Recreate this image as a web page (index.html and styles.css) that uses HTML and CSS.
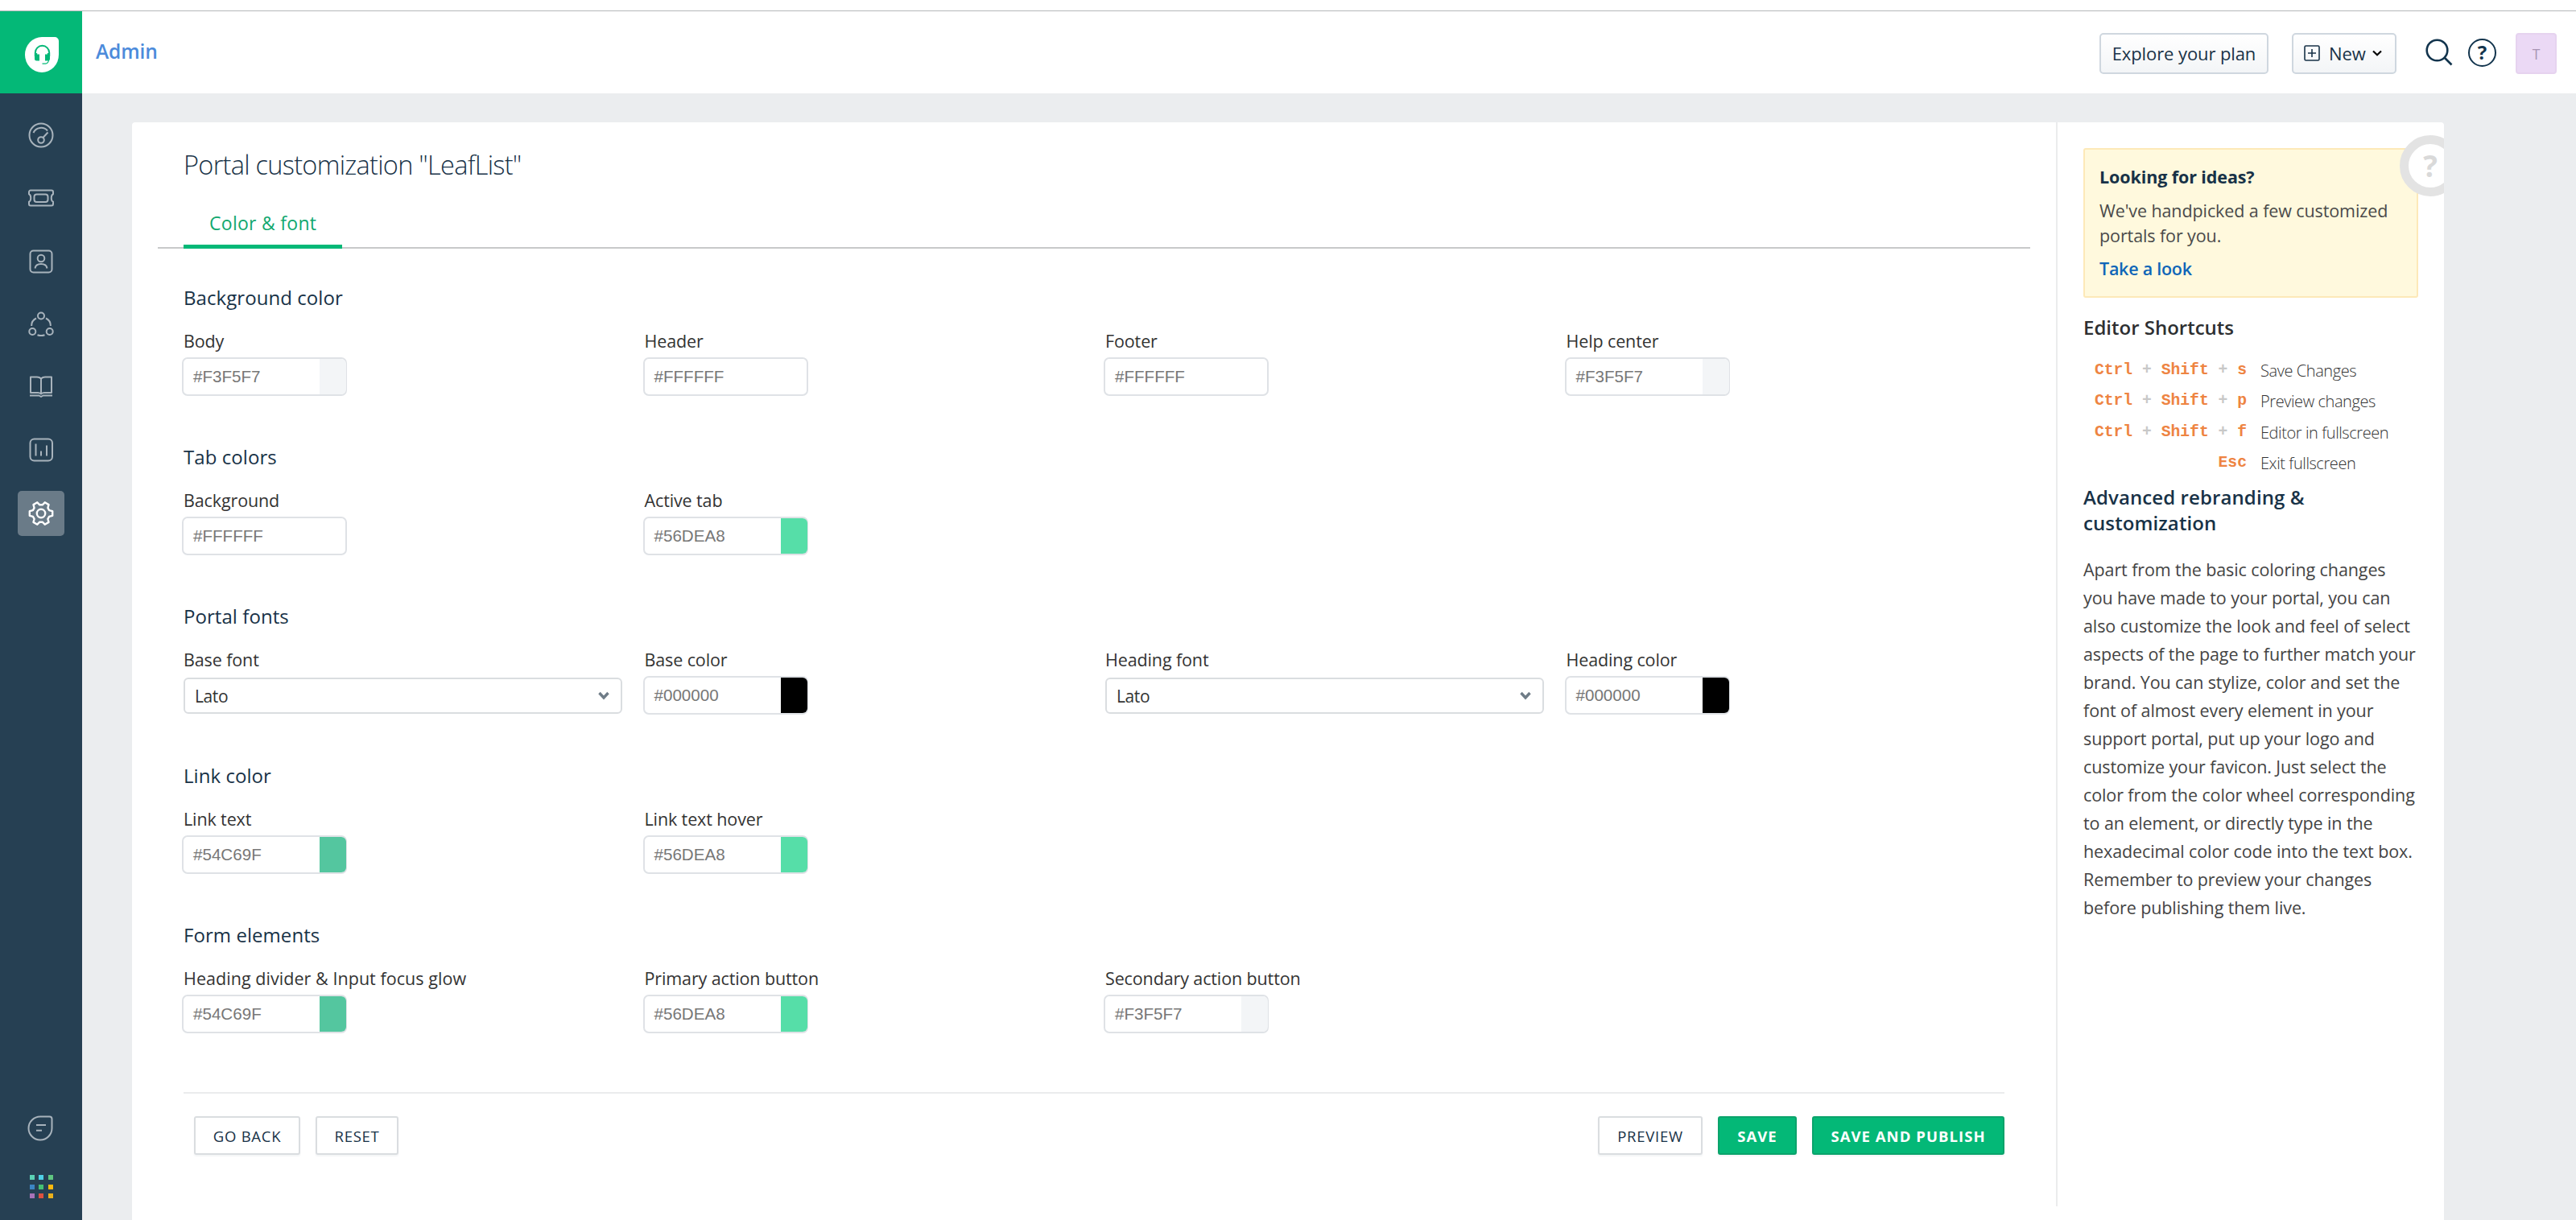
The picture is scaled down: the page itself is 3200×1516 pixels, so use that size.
FILE: index.html
```
<!DOCTYPE html>
<html lang="en">
<head>
    <meta charset="UTF-8">
    <meta name="viewport" content="width=device-width, initial-scale=1.0">
    <title>Portal customization</title>
    <link rel="stylesheet" href="styles.css">
</head>

<body>
    <div class="top-line"></div>
    <div class="app">
        <!-- Left navigation -->
        <nav class="sidebar">
            <a class="logo">
                <svg width="42" height="44" viewBox="0 0 42 44">
                    <path fill="#fff" d="M21 0H37a5 5 0 0 1 5 5V22a21 22 0 0 1-42 0A21 22 0 0 1 21 0Z"/>
                    <path fill="none" stroke="#04b877" stroke-width="2" d="M12.8 24v-4.500a8.600 8.600 0 0 1 17.400 0V24"/>
                    <path fill="#04b877" d="M12 20h3.200v1.500H18v8h-3.500A2.500 2.500 0 0 1 12 27ZM31 20h-3.200v1.500H25v8h3.500A2.500 2.500 0 0 0 31 27Z"/>
                    <path fill="none" stroke="#04b877" stroke-width="1.200" d="M29.500 29c-.5 3-2.500 4-4 4.200h-4"/>
                </svg>
            </a>
            <a class="nav-item">
                <svg width="32" height="32" viewBox="0 0 32 32">
                    <circle cx="16" cy="16" r="14.500"/>
                    <path d="M6.500 13a10.500 10.500 0 0 1 17.500-2.500M24.500 12.500l-6 6.500"/>
                    <circle cx="16" cy="22" r="3.800"/>
                </svg>
            </a>
            <a class="nav-item">
                <svg width="32" height="22" viewBox="0 0 32 22">
                    <path d="M3 1.500h26a2 2 0 0 1 2 2v2.800c-3 1.200-3 8.200 0 9.400v2.800a2 2 0 0 1-2 2H3a2 2 0 0 1-2-2v-2.800c3-1.200 3-8.200 0-9.400V3.500a2 2 0 0 1 2-2Z"/>
                    <rect x="7.500" y="6.500" width="17" height="9.500" rx="3"/>
                </svg>
            </a>
            <a class="nav-item">
                <svg width="30" height="30" viewBox="0 0 30 30">
                    <rect x="1.500" y="1.500" width="27" height="27" rx="4"/>
                    <circle cx="15" cy="11" r="4.300"/>
                    <path d="M7.500 23.500c.5-3.500 3.500-5.500 7.500-5.500s7 2 7.500 5.500"/>
                </svg>
            </a>
            <a class="nav-item">
                <svg width="32" height="32" viewBox="0 0 32 32">
                    <circle cx="16" cy="5.500" r="4"/>
                    <circle cx="5.300" cy="25" r="4"/>
                    <circle cx="26.700" cy="25" r="4"/>
                    <path d="M10 8.500C6 10.500 4 14 4.200 18M22 8.500c4 2 6 5.500 5.800 9.500M11.500 29.200c3 1.200 6 1.200 9 0"/>
                </svg>
            </a>
            <a class="nav-item">
                <svg width="30" height="28" viewBox="0 0 30 28">
                    <path d="M15 3.500C13.500 2 12 1.500 10 1.500H2V21h9c2 0 3 .5 4 1.500 1-1 2-1.500 4-1.500h9V1.500h-8c-2 0-3.500.5-5 2ZM15 3.500V22M1 24.500h11.500l2.500 1.500 2.500-1.500H29"/>
                </svg>
            </a>
            <a class="nav-item">
                <svg width="30" height="30" viewBox="0 0 30 30">
                    <rect x="1.500" y="1.500" width="27.500" height="27" rx="5"/>
                    <path d="M8.500 7.500v15M15 16.500v6M22 9.500v13"/>
                </svg>
            </a>
            <a class="nav-item active">
                <svg width="32" height="30" viewBox="0 0 32 30">
                    <path d="M26.100 11.100L30.200 12.200V17.800L26.100 18.900L24.400 21.800L25.500 25.900L20.700 28.700L17.700 25.700H14.300L11.300 28.700L6.500 25.900L7.600 21.800L5.900 18.900L1.800 17.800V12.200L5.900 11.100L7.600 8.200L6.500 4.100L11.300 1.300L14.300 4.300H17.700L20.700 1.300L25.500 4.100L24.400 8.200Z"/>
                    <circle cx="16" cy="15" r="5.200"/>
                </svg>
            </a>
            <div class="nav-bottom">
                <svg class="chat-icon" width="32" height="32" viewBox="0 0 32 32">
                    <path d="M16 1.500h11.500a3 3 0 0 1 3 3V16A14.500 14.500 0 1 1 16 1.500ZM11 12h12M11 18.800h7"/>
                </svg>
                <div class="apps-grid">
                    <i class="teal"></i><i class="cyan"></i><i class="lime"></i>
                    <i class="blue"></i><i class="green"></i><i class="yellow"></i>
                    <i class="purple"></i><i class="red"></i><i class="amber"></i>
                </div>
            </div>
        </nav>

        <div class="page">
            <header class="header">
                <span class="crumb">Admin</span>
                <div class="header-actions">
                    <button class="header-btn">Explore your plan</button>
                    <button class="header-btn new-btn">
                        <svg width="20" height="20" viewBox="0 0 20 20" fill="none" stroke="#183247" stroke-width="1.600">
                            <rect x="1" y="1" width="18" height="18" rx="1.500"/>
                            <path d="M10 5v10M5 10h10"/>
                        </svg>
                        <span>New</span>
                        <svg class="caret" width="12" height="8" viewBox="0 0 12 8" fill="none" stroke="#000" stroke-width="2.200"><path d="M1 1.500l5 4.700 5-4.700"/></svg>
                    </button>
                    <svg class="search-icon" width="34" height="34" viewBox="0 0 34 34" fill="none" stroke="#12344d" stroke-width="2.600">
                        <circle cx="14.500" cy="14.500" r="12.800"/>
                        <path d="M23.500 23.500l9 9"/>
                    </svg>
                    <span class="help-icon">?</span>
                    <span class="avatar">T</span>
                </div>
            </header>

            <main class="card">
                <section class="content">
                    <h1>Portal customization "LeafList"</h1>
                    <div class="tabs"><a class="tab">Color &amp; font</a></div>

                    <div class="group">
                        <h2>Background color</h2>
                        <div class="fields">
                            <div class="field"><label>Body</label><div class="color-box"><span>#F3F5F7</span><i class="swatch c-f3f5f7"></i></div></div>
                            <div class="field"><label>Header</label><div class="color-box"><span>#FFFFFF</span></div></div>
                            <div class="field"><label>Footer</label><div class="color-box"><span>#FFFFFF</span></div></div>
                            <div class="field"><label>Help center</label><div class="color-box"><span>#F3F5F7</span><i class="swatch c-f3f5f7"></i></div></div>
                        </div>
                    </div>

                    <div class="group">
                        <h2>Tab colors</h2>
                        <div class="fields">
                            <div class="field"><label>Background</label><div class="color-box"><span>#FFFFFF</span></div></div>
                            <div class="field"><label>Active tab</label><div class="color-box"><span>#56DEA8</span><i class="swatch c-56dea8"></i></div></div>
                        </div>
                    </div>

                    <div class="group">
                        <h2>Portal fonts</h2>
                        <div class="fields">
                            <div class="field"><label>Base font</label>
                                <div class="select-box"><span>Lato</span><svg width="16" height="11" viewBox="0 0 16 11" fill="none" stroke="#6f7c87" stroke-width="3.400"><path d="M2.500 2l5.500 6 5.500-6"/></svg></div>
                            </div>
                            <div class="field"><label>Base color</label><div class="color-box"><span>#000000</span><i class="swatch c-000000"></i></div></div>
                            <div class="field"><label>Heading font</label>
                                <div class="select-box"><span>Lato</span><svg width="16" height="11" viewBox="0 0 16 11" fill="none" stroke="#6f7c87" stroke-width="3.400"><path d="M2.500 2l5.500 6 5.500-6"/></svg></div>
                            </div>
                            <div class="field"><label>Heading color</label><div class="color-box"><span>#000000</span><i class="swatch c-000000"></i></div></div>
                        </div>
                    </div>

                    <div class="group">
                        <h2>Link color</h2>
                        <div class="fields">
                            <div class="field"><label>Link text</label><div class="color-box"><span>#54C69F</span><i class="swatch c-54c69f"></i></div></div>
                            <div class="field"><label>Link text hover</label><div class="color-box"><span>#56DEA8</span><i class="swatch c-56dea8"></i></div></div>
                        </div>
                    </div>

                    <div class="group">
                        <h2>Form elements</h2>
                        <div class="fields">
                            <div class="field"><label class="wide">Heading divider &amp; Input focus glow</label><div class="color-box"><span>#54C69F</span><i class="swatch c-54c69f"></i></div></div>
                            <div class="field"><label>Primary action button</label><div class="color-box"><span>#56DEA8</span><i class="swatch c-56dea8"></i></div></div>
                            <div class="field"><label>Secondary action button</label><div class="color-box"><span>#F3F5F7</span><i class="swatch c-f3f5f7"></i></div></div>
                        </div>
                    </div>

                    <div class="form-actions">
                        <button class="btn go-back">GO BACK</button>
                        <button class="btn reset">RESET</button>
                        <button class="btn preview">PREVIEW</button>
                        <button class="btn primary save">SAVE</button>
                        <button class="btn primary publish">SAVE AND PUBLISH</button>
                    </div>
                </section>

                <!-- Help column -->
                <aside class="help">
                    <div class="ideas">
                        <h3>Looking for ideas?</h3>
                        <p>We've handpicked a few customized portals for you.</p>
                        <a>Take a look</a>
                    </div>
                    <h4 class="shortcuts-title">Editor Shortcuts</h4>
                    <dl class="shortcuts">
                        <dt>Ctrl <em>+</em> Shift <em>+</em> s</dt><dd>Save Changes</dd>
                        <dt>Ctrl <em>+</em> Shift <em>+</em> p</dt><dd>Preview changes</dd>
                        <dt>Ctrl <em>+</em> Shift <em>+</em> f</dt><dd>Editor in fullscreen</dd>
                        <dt>Esc</dt><dd>Exit fullscreen</dd>
                    </dl>
                    <h4>Advanced rebranding &amp;<br>customization</h4>
                    <p class="about">Apart from the basic coloring changes<br>
                        you have made to your portal, you can<br>
                        also customize the look and feel of select<br>
                        aspects of the page to further match your<br>
                        brand. You can stylize, color and set the<br>
                        font of almost every element in your<br>
                        support portal, put up your logo and<br>
                        customize your favicon. Just select the<br>
                        color from the color wheel corresponding<br>
                        to an element, or directly type in the<br>
                        hexadecimal color code into the text box.<br>
                        Remember to preview your changes<br>
                        before publishing them live.</p>
                </aside>
                <span class="help-ring">?</span>
            </main>
        </div>
    </div>
</body>
</html>
```
FILE: styles.css
```
/* General styles */
* {
    box-sizing: border-box;
}

body {
    margin: 0;
    background-color: #fff;
    font-family: "Open Sans", "Noto Sans", sans-serif;
    font-size: 21.5px;
    color: #333;
}

h1, h2, h3, h4, p, dl, dd {
    margin: 0;
}

button {
    font-family: inherit;
    padding: 0;
}

.top-line {
    height: 14px;
    border-bottom: 1px solid #b5b7b9;
}

.app {
    display: flex;
    height: 1502px;
    overflow: hidden;
}

/* Left navigation */
.sidebar {
    width: 102px;
    background-color: #264053;
    display: flex;
    flex-direction: column;
    align-items: center;
}

.logo {
    width: 102px;
    height: 102px;
    padding: 32px 0 0 31px;
    margin-bottom: 24px;
    background-color: #04b877;
}

.nav-item {
    display: flex;
    align-items: center;
    justify-content: center;
    width: 58px;
    height: 56px;
    margin-bottom: 22.3px;
    border-radius: 5px;
}

.nav-item svg, .chat-icon {
    fill: none;
    stroke: #a8b3bc;
    stroke-width: 2;
    stroke-linejoin: round;
}

.nav-item.active {
    background-color: #6a7b88;
}

.nav-item.active svg {
    stroke: #fff;
    stroke-width: 2.4;
}

.nav-bottom {
    margin-top: auto;
    margin-bottom: 27px;
    display: flex;
    flex-direction: column;
    align-items: center;
    gap: 42px;
}

.chat-icon {
    margin-right: 3px;
}

.apps-grid {
    display: grid;
    grid-template-columns: repeat(3, 6px);
    grid-auto-rows: 6px;
    gap: 5.5px;
}

.teal { background-color: #5ad1b4; }
.cyan { background-color: #4fd0e6; }
.lime { background-color: #5fc680; }
.blue { background-color: #3c85c4; }
.green { background-color: #45c073; }
.yellow { background-color: #fbb90e; }
.purple { background-color: #a873b8; }
.red { background-color: #dd5140; }
.amber { background-color: #eab11c; }

/* Header */
.page {
    flex: 1;
    background-color: #ebedef;
}

.header {
    height: 102px;
    padding: 0 24px 0 17px;
    background-color: #fff;
    display: flex;
    align-items: center;
    justify-content: space-between;
}

.crumb {
    font-size: 24.5px;
    font-weight: 600;
    letter-spacing: -0.1px;
    color: #4c8bdb;
    padding-bottom: 4px;
}

.header-actions {
    display: flex;
    align-items: center;
    padding-top: 3px;
}

.header-btn {
    height: 51px;
    width: 210px;
    padding-bottom: 2px;
    border: 2px solid #cfd7df;
    border-radius: 5px;
    background-image: linear-gradient(#fff, #f3f5f7);
    font-size: 22px;
    font-weight: 500;
    letter-spacing: -0.1px;
    color: #183247;
}

.new-btn {
    display: flex;
    align-items: center;
    width: 130px;
    margin-left: 29px;
    padding-left: 13px;
}

.new-btn span {
    margin-left: 11px;
}

.caret {
    margin-left: 8px;
}

.search-icon {
    margin: 0 19px 3px 36px;
}

.help-icon {
    width: 35px;
    height: 35px;
    margin-bottom: 3px;
    border: 2.6px solid #12344d;
    border-radius: 50%;
    font-size: 24px;
    font-weight: 700;
    line-height: 30px;
    text-align: center;
    color: #12344d;
}

.avatar {
    width: 51px;
    height: 51px;
    margin-left: 24px;
    border: 2px solid #e6d3ef;
    border-radius: 4px;
    background-color: #ebd9f5;
    font-size: 17.5px;
    line-height: 49px;
    text-align: center;
    color: #a794b3;
}

/* Main card */
.card {
    position: relative;
    display: flex;
    height: 1364px;
    margin: 36px 164px 0 62px;
    background-color: #fff;
    border-radius: 4px 4px 0 0;
    overflow: hidden;
}

.content {
    width: 2392px;
    height: 1347px;
    padding: 29px 32px 0;
    border-right: 2px solid #ebeced;
}

h1 {
    margin-left: 32px;
    font-size: 32.5px;
    font-weight: 300;
    line-height: 48px;
    letter-spacing: -0.72px;
    color: #183247;
}

.tabs {
    display: flex;
    height: 80px;
    padding-left: 32px;
    margin-bottom: 45px;
    border-bottom: 2px solid #c8c9ca;
}

.tab {
    height: 80px;
    padding: 28px 32px 0;
    border-bottom: 5px solid #04b877;
    font-size: 23px;
    line-height: 40px;
    letter-spacing: 0.28px;
    color: #12a86f;
}

.group {
    height: 198px;
    padding-left: 32px;
}

h2 {
    margin-bottom: 23px;
    font-size: 24px;
    font-weight: 400;
    line-height: 32px;
    letter-spacing: 0.06px;
    color: #183247;
}

.fields {
    display: grid;
    grid-template-columns: repeat(4, 572.5px);
}

label {
    display: block;
    height: 35px;
    line-height: 30px;
    letter-spacing: -0.12px;
    white-space: nowrap;
}

label.wide {
    letter-spacing: 0.05px;
}

.color-box {
    display: flex;
    justify-content: space-between;
    width: 205px;
    height: 48px;
    margin-left: -2px;
    padding-left: 12px;
    border: 2px solid #dfe2e6;
    border-radius: 7px;
    font-family: "Liberation Sans", Arial, sans-serif;
    font-size: 20.6px;
    line-height: 44px;
    color: #777;
}

.swatch {
    width: 33px;
    margin-right: -1px;
    border-radius: 0 6px 6px 0;
}

.c-f3f5f7 { background-color: #f3f5f7; }
.c-56dea8 { background-color: #56dea8; }
.c-54c69f { background-color: #54c69f; }
.c-000000 { background-color: #000; }

.select-box {
    display: flex;
    align-items: center;
    justify-content: space-between;
    width: 545px;
    height: 45px;
    margin-top: 2px;
    padding: 0 13px 0 12px;
    border: 2px solid #dadde0;
    border-radius: 6px;
    font-size: 21px;
    letter-spacing: -0.4px;
}

/* Buttons under the form */
.form-actions {
    display: flex;
    gap: 19px;
    margin: 13px 32px 0;
    padding: 28px 0 0 13px;
    border-top: 2px solid #ebeced;
}

.btn {
    height: 48px;
    padding-top: 1px;
    border: 2px solid #dadde0;
    border-radius: 3px;
    background-color: #fff;
    box-shadow: 0 2px 2px rgba(24, 50, 71, 0.05);
    font-size: 18.5px;
    letter-spacing: 0.75px;
    color: #183247;
}

.go-back { width: 132px; }
.reset { width: 103px; }
.preview { width: 130px; margin-left: auto; }
.save { width: 98px; }
.publish { width: 239px; }

.primary {
    border-color: #0ba36b;
    background-color: #04b877;
    font-weight: 700;
    letter-spacing: 1.05px;
    color: #fff;
}

/* Help column */
.help {
    width: 480px;
    padding: 32px;
}

.ideas {
    height: 186px;
    padding: 18px 18px 0;
    border: 2px solid #fde9b8;
    border-radius: 3px;
    background-color: #fff9dd;
    line-height: 31px;
    letter-spacing: -0.1px;
}

.ideas h3 {
    margin-bottom: 10px;
    font-size: 21.5px;
    font-weight: 700;
    line-height: 32px;
    color: #183247;
}

.ideas p {
    margin-bottom: 10px;
    color: #4a4a4a;
}

.ideas a {
    font-weight: 600;
    letter-spacing: -0.25px;
    color: #0f66b8;
}

h4 {
    font-size: 24px;
    font-weight: 600;
    line-height: 32px;
    letter-spacing: 0.1px;
    color: #183247;
}

.shortcuts-title {
    margin: 20.5px 0 18px;
    letter-spacing: 0;
    color: #2d2f31;
}

.shortcuts {
    display: grid;
    grid-template-columns: 203px 1fr;
    column-gap: 17px;
    grid-auto-rows: 38.5px;
    line-height: 39px;
    margin-bottom: 7px;
}

.shortcuts dt {
    text-align: right;
    font-family: "Liberation Mono", "Courier New", monospace;
    font-size: 19.7px;
    font-weight: 700;
    line-height: 38px;
    color: #ee8442;
}

.shortcuts em {
    font-style: normal;
    color: #c8c8c8;
}

.shortcuts dd {
    font-size: 20px;
    font-weight: 300;
    letter-spacing: -0.42px;
}

.about {
    margin-top: 24px;
    line-height: 35px;
    letter-spacing: -0.1px;
    white-space: nowrap;
    color: #444;
}

/* Help bubble cut off by the card edge */
.help-ring {
    position: absolute;
    top: 16px;
    right: -21px;
    width: 76px;
    height: 76px;
    border: 11px solid #e3e3e3;
    border-radius: 50%;
    background-color: #fff;
    font-size: 37px;
    font-weight: 700;
    line-height: 54px;
    text-align: center;
    color: #d9d9d9;
}
```
